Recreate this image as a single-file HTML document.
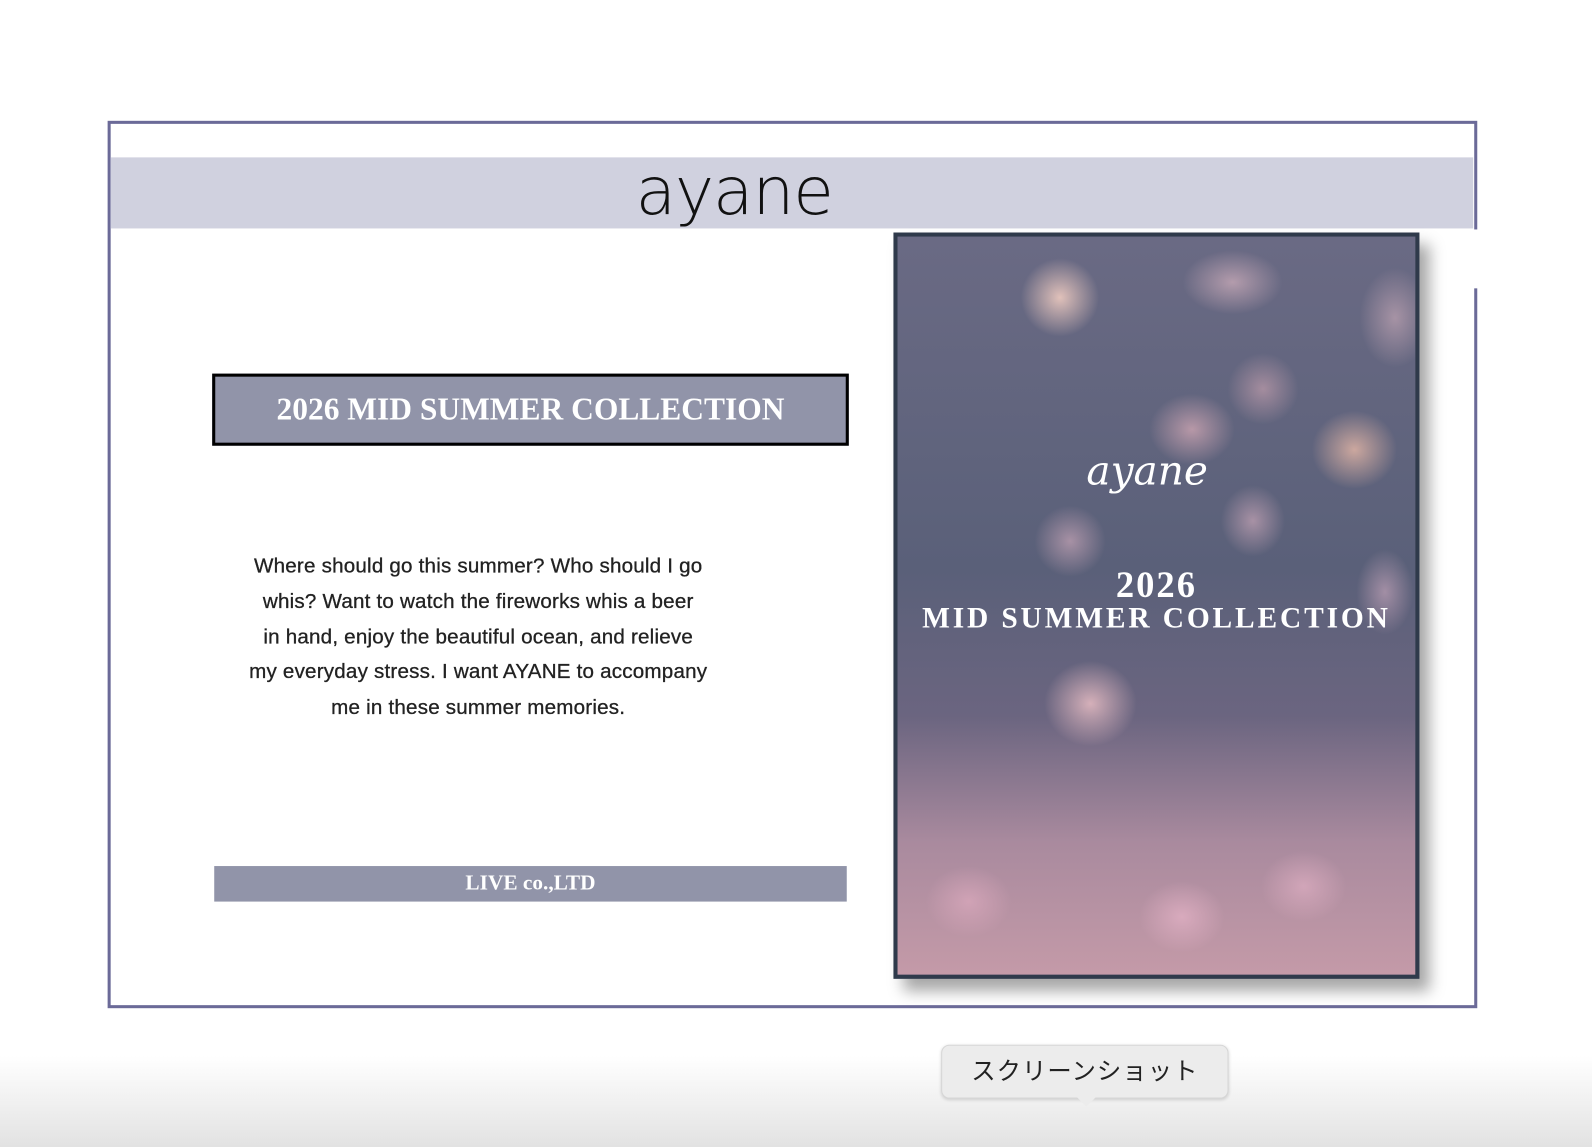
<!DOCTYPE html>
<html><head><meta charset="utf-8"><style>
*{margin:0;padding:0;box-sizing:border-box}
body{width:1592px;height:1122px;background:#fff;position:relative;overflow:hidden;font-family:"Liberation Sans","Noto Sans CJK JP",sans-serif}
#w{position:absolute;left:0;top:0;width:1568px;height:1105px;transform:scale(1.0153);transform-origin:0 0}
.bottom{position:absolute;left:0;top:1040px;width:1600px;height:90px;background:linear-gradient(#fff,#e2e2e2)}
.frame{position:absolute;left:106px;top:119px;width:1349px;height:874px;border:3px solid #6b6a98}
.gap{position:absolute;left:1449px;top:226px;width:8px;height:58px;background:#fff}
.band{position:absolute;left:109px;top:155px;width:1342px;height:70px;background:#d0d1df}
.logo{position:absolute;left:626px;top:152px;font-family:"DejaVu Sans",sans-serif;font-weight:200;font-size:65px;color:#111;letter-spacing:-1px}
.title{position:absolute;left:209px;top:368px;width:627px;height:71px;background:#9194a9;border:3px solid #000;color:#fff;font-family:"Liberation Serif",serif;font-weight:bold;font-size:31px;text-align:center;line-height:64px}
.para{position:absolute;left:171px;top:541px;width:600px;text-align:center;font-size:20.3px;line-height:34.8px;color:#222;letter-spacing:0.2px;-webkit-text-stroke:0.3px #222;white-space:nowrap}
.live{position:absolute;left:211px;top:853px;width:623px;height:35px;background:#9194a9;color:#fff;font-family:"Liberation Serif",serif;font-weight:bold;font-size:21px;text-align:center;line-height:33px}
.cover{position:absolute;left:880px;top:229px;width:518px;height:735px;border:4px solid #2f3a4b;box-shadow:10px 12px 14px rgba(0,0,0,.35);overflow:hidden;background:#5d6077}
.cover .bg{position:absolute;inset:0;background:
radial-gradient(ellipse 55px 55px at 160px 60px,rgba(255,215,200,.8),transparent 70%),
radial-gradient(ellipse 70px 45px at 330px 45px,rgba(230,190,200,.6),transparent 70%),
radial-gradient(ellipse 50px 70px at 490px 80px,rgba(230,190,200,.5),transparent 70%),
radial-gradient(ellipse 60px 55px at 450px 210px,rgba(240,190,170,.75),transparent 70%),
radial-gradient(ellipse 60px 50px at 290px 190px,rgba(230,180,190,.65),transparent 70%),
radial-gradient(ellipse 50px 50px at 360px 150px,rgba(230,180,190,.5),transparent 70%),
radial-gradient(ellipse 50px 50px at 170px 300px,rgba(230,185,200,.55),transparent 70%),
radial-gradient(ellipse 45px 50px at 350px 280px,rgba(230,185,200,.55),transparent 70%),
radial-gradient(ellipse 65px 60px at 190px 460px,rgba(240,195,200,.8),transparent 70%),
radial-gradient(ellipse 40px 60px at 480px 350px,rgba(220,180,200,.55),transparent 70%),
radial-gradient(ellipse 60px 50px at 70px 655px,rgba(220,170,190,.7),transparent 70%),
radial-gradient(ellipse 60px 50px at 280px 670px,rgba(230,180,200,.7),transparent 70%),
radial-gradient(ellipse 60px 50px at 400px 640px,rgba(230,180,200,.6),transparent 70%),
linear-gradient(180deg,#6a6a84 0%,#5a6079 45%,#6b6580 65%,#a98a9e 82%,#c49aa8 100%)}
.c-logo{position:absolute;left:186px;top:208px;font-family:"DejaVu Serif",serif;font-style:italic;font-size:40px;color:#fff}
.c-year{position:absolute;left:0;width:510px;top:322px;text-align:center;color:#fff;font-family:"Liberation Serif",serif;font-weight:bold;font-size:36px;letter-spacing:2px}
.c-t{position:absolute;left:0;width:510px;top:360px;text-align:center;color:#fff;font-family:"Liberation Serif",serif;font-weight:bold;font-size:29px;letter-spacing:2.8px;white-space:nowrap}
.tip{position:absolute;left:927px;top:1029px;width:283px;height:53px;background:#ececec;border:1px solid #d6d6d6;border-radius:8px;box-shadow:0 1px 3px rgba(0,0,0,.15);font-size:24px;color:#222;text-align:center;line-height:51px;letter-spacing:1px}
.tip::after{content:"";position:absolute;left:133px;top:51px;border:9px solid transparent;border-top-color:#ececec}
</style></head><body>
<div id="w">
<div class="bottom"></div>
<div class="frame"></div>
<div class="gap"></div>
<div class="band"></div>
<div class="logo">ayane</div>
<div class="title">2026 MID SUMMER COLLECTION</div>
<div class="para">Where should go this summer? Who should I go<br>whis? Want to watch the fireworks whis a beer<br>in hand, enjoy the beautiful ocean, and relieve<br>my everyday stress. I want AYANE to accompany<br>me in these summer memories.</div>
<div class="live">LIVE co.,LTD</div>
<div class="cover"><div class="bg"></div>
<div class="c-logo">ayane</div>
<div class="c-year">2026</div>
<div class="c-t">MID SUMMER COLLECTION</div>
</div>
<div class="tip">スクリーンショット</div>
</div>
</body></html>
